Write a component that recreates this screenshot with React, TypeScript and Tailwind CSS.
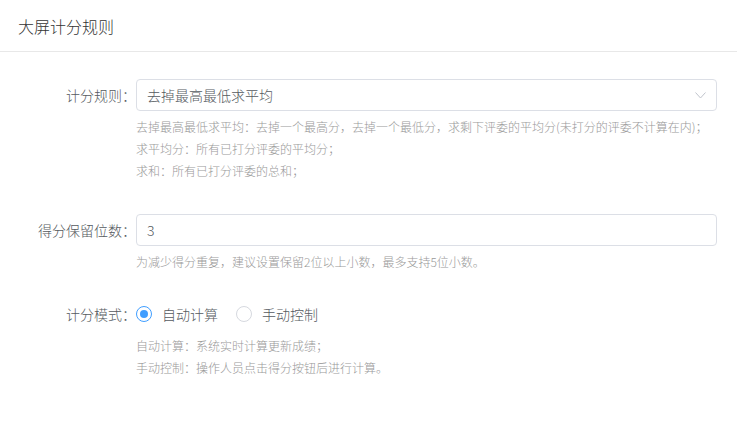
const font = { fontFamily: '"Noto Sans CJK SC", "Noto Sans", sans-serif' };

function Label({ text }: { text: string }) {
  return (
    <div className="w-[136px] shrink-0 text-right text-sm font-light leading-8 text-[#555a60]">{text}</div>
  );
}

function Help({ lines }: { lines: string[] }) {
  return (
    <div className="mt-[5px] text-xs font-light leading-[22px] text-[#999999]">
      {lines.map((l) => (
        <div key={l}>{l}</div>
      ))}
    </div>
  );
}

function Radio({ checked, label }: { checked: boolean; label: string }) {
  return (
    <label className="mr-[18px] flex items-center gap-[10px]">
      <span
        className={`flex h-4 w-4 items-center justify-center rounded-full border ${
          checked ? "border-[#409eff]" : "border-[#d6d9df]"
        } bg-white`}
      >
        {checked && <span className="h-[8px] w-[8px] rounded-full bg-[#409eff]" />}
      </span>
      <span className="text-sm font-light text-[#555a60]">{label}</span>
    </label>
  );
}

export default function App() {
  return (
    <div className="h-[423px] w-full bg-white" style={font}>
      <div className="flex h-[52px] items-center border-b border-[#e8e8e8] px-[18px]">
        <h1 className="text-base font-light text-[#333333]">大屏计分规则</h1>
      </div>

      <div className="pr-5 pt-[27px]">
        {/* 计分规则 */}
        <div className="flex">
          <Label text="计分规则：" />
          <div className="flex-1">
            <div className="flex h-8 items-center justify-between rounded border border-[#dcdfe6] pl-[10px] pr-[10px] text-sm font-light text-[#555a60]">
              <span>去掉最高最低求平均</span>
              <svg width="11" height="7" viewBox="0 0 11 7" fill="none">
                <path d="M0.5 0.5l5 5.5 5-5.5" stroke="#c0c4cc" strokeWidth="1" />
              </svg>
            </div>
            <Help
              lines={[
                "去掉最高最低求平均：去掉一个最高分，去掉一个最低分，求剩下评委的平均分(未打分的评委不计算在内)；",
                "求平均分：所有已打分评委的平均分；",
                "求和：所有已打分评委的总和；",
              ]}
            />
          </div>
        </div>

        {/* 得分保留位数 */}
        <div className="mt-[32px] flex">
          <Label text="得分保留位数：" />
          <div className="flex-1">
            <div className="flex h-8 items-center rounded border border-[#dcdfe6] px-[10px] text-sm font-light text-[#555a60]">
              3
            </div>
            <Help lines={["为减少得分重复，建议设置保留2位以上小数，最多支持5位小数。"]} />
          </div>
        </div>

        {/* 计分模式 */}
        <div className="mt-[25px] flex">
          <Label text="计分模式：" />
          <div className="flex-1">
            <div className="flex h-8 items-center">
              <Radio checked label="自动计算" />
              <Radio checked={false} label="手动控制" />
            </div>
            <Help lines={["自动计算：系统实时计算更新成绩；", "手动控制：操作人员点击得分按钮后进行计算。"]} />
          </div>
        </div>
      </div>
    </div>
  );
}
